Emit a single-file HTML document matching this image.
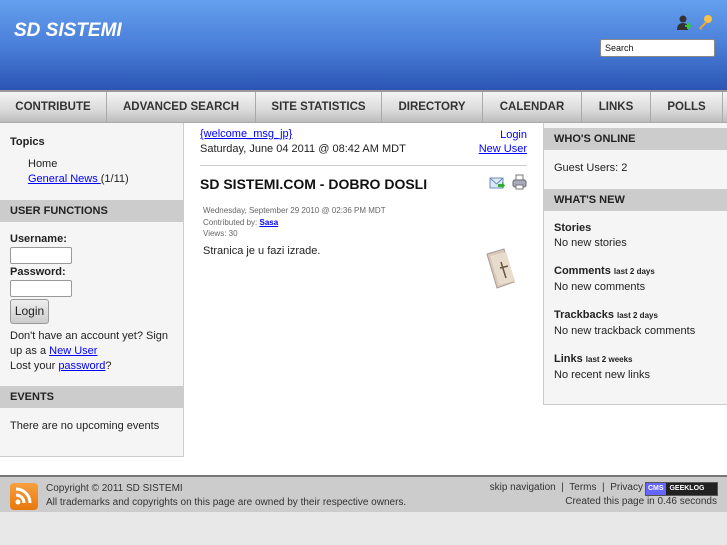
<!DOCTYPE html>
<html><head><meta charset="utf-8"><style>
*{margin:0;padding:0;box-sizing:border-box}
body{width:727px;height:545px;overflow:hidden;font-family:"Liberation Sans",sans-serif;font-size:11px;color:#222;background:#fff;position:relative}
.a{position:absolute}
a{color:#00f;text-decoration:underline}
#hd{left:0;top:0;width:727px;height:90px;background:linear-gradient(#64a0ee,#4a7fd9 50%,#2b55b4)}
#nav{left:0;top:90px;width:727px;height:33px;border-top:2px solid #999;background:linear-gradient(#f4f4f4,#dadada 60%,#bcbcbc);border-bottom:1px solid #aaa}
.ni{position:absolute;top:0;height:31px;line-height:31px;text-align:center;font-weight:bold;font-size:11.5px;color:#333;border-right:1px solid #aaa}
#left{left:0;top:123px;width:184px;height:334px;background:#f5f5f5;border-right:1px solid #ccc;border-bottom:1px solid #ccc}
#right{left:543px;top:123px;width:184px;height:282px;background:#f5f5f5;border-left:1px solid #ccc;border-bottom:1px solid #ccc}
#ctr{left:184px;top:123px;width:359px;height:352px;background:#fff}
.bh{position:absolute;left:0;width:100%;height:22px;line-height:22px;background:#ccc;font-weight:bold;padding-left:10px;color:#222}
.inp{position:absolute;width:62px;height:17px;border:1px solid #999;border-radius:2px;background:#fff}
#ft{left:0;top:475px;width:727px;height:37px;background:#ccc;border-top:2px solid #777}
</style></head><body>
<div class="a" style="left:0;top:512px;width:727px;height:33px;background:#e8e8e8"></div>
<div id="hd" class="a">
 <div class="a" style="left:14px;top:20px;color:#fff;font-weight:bold;font-style:italic;font-size:19px">SD SISTEMI</div>
 <svg class="a" style="left:676px;top:15px" width="16" height="16"><circle cx="7" cy="4" r="3.5" fill="#333"/><path d="M1 15 Q1 8 7 8 Q12 8 12 13 L12 15Z" fill="#333"/><rect x="9" y="10" width="6" height="2" fill="#3c3"/><rect x="11" y="8" width="2" height="6" fill="#3c3"/></svg>
 <svg class="a" style="left:697px;top:14px" width="16" height="17"><circle cx="11" cy="5" r="4" fill="#f5c24a"/><path d="M9 7 L2 14 L4 16 L5 15 L4 14 L6 13 L10 9Z" fill="#e8a830"/></svg>
 <div class="a" style="left:600px;top:39px;width:115px;height:18px;background:#fff;border:1px solid #888;border-radius:2px;font-size:9px;line-height:16px;padding-left:4px;color:#111">Search</div>
</div>
<div id="nav" class="a">
 <div class="ni" style="left:0;width:107px">CONTRIBUTE</div>
 <div class="ni" style="left:107px;width:149px">ADVANCED SEARCH</div>
 <div class="ni" style="left:256px;width:126px">SITE STATISTICS</div>
 <div class="ni" style="left:382px;width:101px">DIRECTORY</div>
 <div class="ni" style="left:483px;width:99px">CALENDAR</div>
 <div class="ni" style="left:582px;width:69px">LINKS</div>
 <div class="ni" style="left:651px;width:72px">POLLS</div>
</div>
<div id="left" class="a">
 <div class="a" style="left:10px;top:13px;font-weight:bold">Topics</div>
 <div class="a" style="left:28px;top:35px">Home</div>
 <div class="a" style="left:28px;top:50px"><a href="#">General News </a>(1/11)</div>
 <div class="bh" style="top:77px">USER FUNCTIONS</div>
 <div class="a" style="left:10px;top:110px;font-weight:bold">Username:</div>
 <div class="inp" style="left:10px;top:124px"></div>
 <div class="a" style="left:10px;top:143px;font-weight:bold">Password:</div>
 <div class="inp" style="left:10px;top:157px"></div>
 <div class="a" style="left:10px;top:176px;width:39px;height:25px;border:1px solid #999;border-radius:3px;background:linear-gradient(#eee,#ccc);font-size:12px;line-height:23px;text-align:center">Login</div>
 <div class="a" style="left:10px;top:206px;line-height:15px;width:170px">Don't have an account yet? Sign up as a <a href="#">New User</a><br>Lost your <a href="#">password</a>?</div>
 <div class="bh" style="top:263px">EVENTS</div>
 <div class="a" style="left:10px;top:297px">There are no upcoming events</div>
</div>
<div id="ctr" class="a">
 <div class="a" style="left:16px;top:5px"><a href="#">{welcome_msg_jp}</a></div>
 <div class="a" style="left:16px;top:20px">Saturday, June 04 2011 @ 08:42 AM MDT</div>
 <div class="a" style="right:16px;top:5px;text-align:right;line-height:14px"><a href="#" style="text-decoration:none">Login</a><br><a href="#">New User</a></div>
 <div class="a" style="left:16px;top:42px;width:327px;height:1px;background:#ccc"></div>
 <div class="a" style="left:16px;top:53px;font-weight:bold;font-size:14px;color:#111">SD SISTEMI.COM - DOBRO DOSLI</div>
 <svg class="a" style="left:305px;top:53px" width="16" height="14"><rect x="1" y="2" width="13" height="10" fill="#dde8f5" stroke="#6a8cc0"/><path d="M1 2 L7.5 8 L14 2" fill="none" stroke="#6a8cc0"/><path d="M9 8 H13 V6 L16 9.5 L13 13 V11 H9Z" fill="#3a3"/></svg>
 <svg class="a" style="left:328px;top:51px" width="15" height="16"><rect x="4" y="1" width="7" height="6" fill="#fff" stroke="#777"/><rect x="1" y="6" width="13" height="7" rx="2" fill="#aab" stroke="#667"/><rect x="4" y="11" width="7" height="4" fill="#fff" stroke="#777"/></svg>
 <div class="a" style="left:19px;top:82px;font-size:8px;color:#666;line-height:11.5px">Wednesday, September 29 2010 @ 02:36 PM MDT<br>Contributed by: <a href="#" style="font-weight:bold">Sasa</a><br>Views: 30</div>
 <div class="a" style="left:19px;top:122px">Stranica je u fazi izrade.</div>
 <svg class="a" style="left:300px;top:125px" width="36" height="42"><path d="M3 6 L20 1 L30 34 L13 40Z" fill="#d8c8b8" stroke="#a99"/><path d="M6 8 L22 4 L31 33 L15 37Z" fill="#e8dccc"/><path d="M17 14 L22 30 M16 20 L24 18" stroke="#654" stroke-width="1.5"/></svg>
</div>
<div id="right" class="a">
 <div class="bh" style="top:5px">WHO'S ONLINE</div>
 <div class="a" style="left:10px;top:39px">Guest Users: 2</div>
 <div class="bh" style="top:66px">WHAT'S NEW</div>
 <div class="a" style="left:10px;top:98px;line-height:14.5px"><b>Stories</b><br>No new stories</div>
 <div class="a" style="left:10px;top:141px;line-height:14.5px"><b>Comments</b> <b style="font-size:8px">last 2 days</b><br>No new comments</div>
 <div class="a" style="left:10px;top:185px;line-height:14.5px"><b>Trackbacks</b> <b style="font-size:8px">last 2 days</b><br>No new trackback comments</div>
 <div class="a" style="left:10px;top:229px;line-height:14.5px"><b>Links</b> <b style="font-size:8px">last 2 weeks</b><br>No recent new links</div>
</div>
<div id="ft" class="a">
 <div class="a" style="left:10px;top:6px;width:28px;height:27px;border-radius:4px;background:linear-gradient(#f7a040,#e8780c)"></div>
 <svg class="a" style="left:10px;top:6px" width="28" height="27"><circle cx="8" cy="19" r="2.5" fill="#fff"/><path d="M6 12 A8 8 0 0 1 14 20" stroke="#fff" stroke-width="3" fill="none"/><path d="M6 6 A14 14 0 0 1 20 20" stroke="#fff" stroke-width="3" fill="none"/></svg>
 <div class="a" style="left:46px;top:5px;color:#333;font-size:10px;line-height:14px">Copyright © 2011 SD SISTEMI<br>All trademarks and copyrights on this page are owned by their respective owners.</div>
 <div class="a" style="right:84px;top:5px;color:#333;font-size:10px">skip navigation &nbsp;|&nbsp; Terms &nbsp;|&nbsp; Privacy</div>
 <div class="a" style="left:645px;top:5px;width:73px;height:14px;border:1px solid #555;background:#222;font-size:7px;color:#fff;line-height:12px;font-weight:bold"><span style="background:#66f;padding:0 2px;display:inline-block">CMS</span> &nbsp;GEEKLOG</div>
 <div class="a" style="right:10px;top:19px;color:#333;font-size:10px">Created this page in 0.46 seconds</div>
</div>
</body></html>
